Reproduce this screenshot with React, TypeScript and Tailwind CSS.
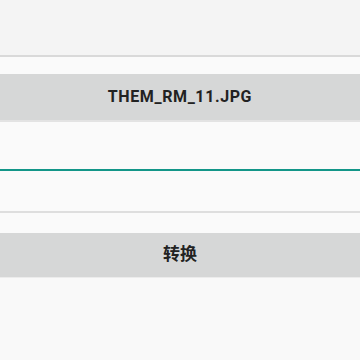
import React from "react";

export default function App() {
  return (
    <div className="w-[360px] h-[360px] overflow-hidden bg-[#fafafa] flex flex-col" style={{ fontFamily: 'Roboto, "Noto Sans CJK SC", sans-serif' }}>
      <div className="h-[57px] bg-[#f4f4f4] border-b-2 border-[#d9d9d9] shrink-0" />
      <div className="h-[17px] shrink-0 bg-[#fafafa]" />
      <button className="h-[46px] shrink-0 bg-[#d6d7d7] text-[#222] text-[16px] font-bold flex items-center justify-center tracking-[0.6px]">
        THEM_RM_11.JPG
      </button>
      <div className="h-[2px] shrink-0 bg-[#e3e3e3]" />
      <div className="h-[49px] shrink-0 bg-[#fafafa] border-b-2 border-[#129688]" />
      <div className="h-[42px] shrink-0 bg-[#fafafa] border-b-2 border-[#dedede]" />
      <div className="h-[20px] shrink-0 bg-[#fafafa]" />
      <button className="h-[44px] shrink-0 bg-[#d6d7d7] text-[#222] text-[17px] font-bold flex items-center justify-center">
        转换
      </button>
      <div className="h-[1px] shrink-0 bg-[#ececec]" />
      <div className="flex-1 bg-[#f9f9f9]" />
    </div>
  );
}
